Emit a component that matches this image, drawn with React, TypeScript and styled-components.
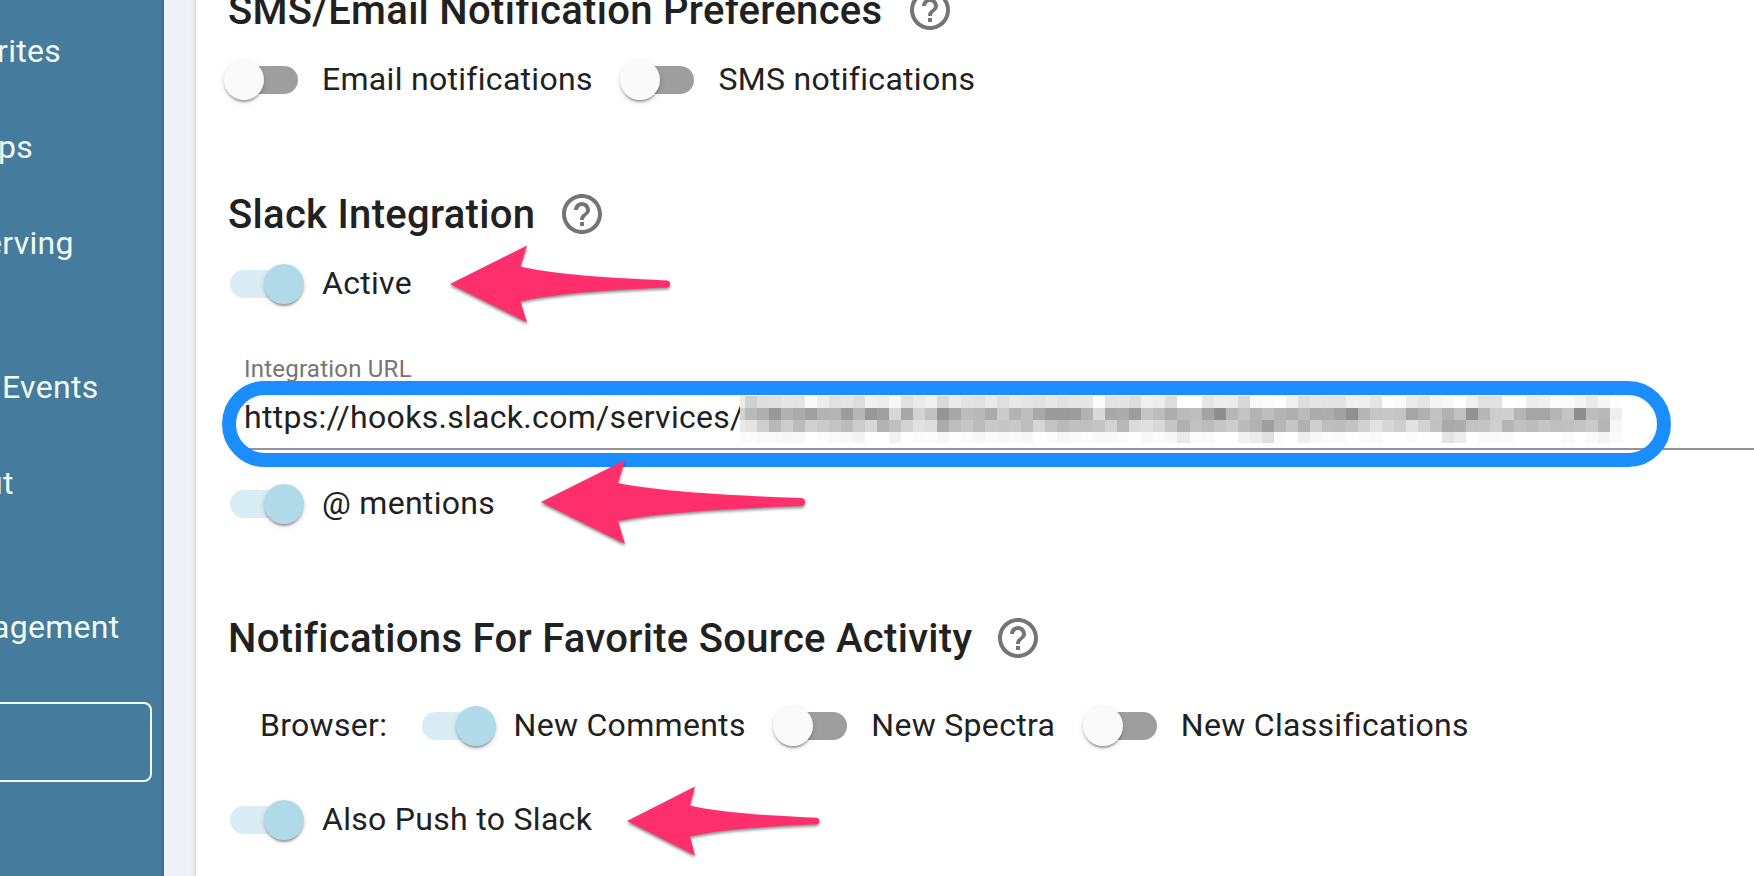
import React from "react";
import styled, { createGlobalStyle } from "styled-components";

const GlobalStyle = createGlobalStyle`
  *, *::before, *::after { box-sizing: border-box; }
  body {
    margin: 0;
    background: #f0f1f6;
    font-family: Roboto, "Liberation Sans", sans-serif;
    color: #212121;
    overflow: hidden;
  }
`;

const Page = styled.div`
  position: relative;
  display: flex;
  width: 1754px;
  height: 876px;
  overflow: hidden;
  background: #f0f1f6;
`;

const Sidebar = styled.nav`
  flex: none;
  width: 164px;
  height: 876px;
  overflow: hidden;
  background: #457b9d;
  border-right: 2px solid #3e6f8e;
`;

const NavItem = styled.div<{ $gap?: number; $shift?: number }>`
  height: 48px;
  margin-top: ${(p) => p.$gap ?? 48}px;
  margin-left: ${(p) => p.$shift ?? 0}px;
  font-size: 32px;
  line-height: 48px;
  letter-spacing: 0.3px;
  white-space: nowrap;
  color: #f1faee;
`;

const NavBox = styled.div`
  width: 160px;
  height: 80px;
  margin: 51px 0 0 -8px;
  border: 2px solid #f1faee;
  border-radius: 8px;
`;

const Paper = styled.main`
  flex: none;
  width: 1700px;
  height: 1000px;
  margin: -40px 0 0 32px;
  padding: 18px 32px 0;
  background: #fff;
  box-shadow: 0 4px 2px -2px rgba(0, 0, 0, 0.2), 0 2px 2px rgba(0, 0, 0, 0.14),
    0 2px 6px rgba(0, 0, 0, 0.12);
`;

const Section = styled.section`
  margin-bottom: 64px;
`;

const HeadingRow = styled.div<{ $gap: number }>`
  display: flex;
  align-items: center;
  gap: ${(p) => p.$gap}px;
  height: 64px;
`;

const Heading = styled.h6`
  margin: 0;
  padding-top: 2px;
  font-size: 40px;
  font-weight: 500;
  line-height: 64px;
  letter-spacing: 0.3px;
  white-space: nowrap;
`;

const HelpSvg = styled.svg`
  width: 48px;
  height: 48px;
  fill: #757575;
`;

const SwitchRow = styled.div<{ $inset?: boolean }>`
  display: flex;
  align-items: center;
  height: 76px;
  padding-left: ${(p) => (p.$inset ? 32 : 0)}px;
  margin: ${(p) => (p.$inset ? "18px 0" : "0")};
`;

const ControlLabel = styled.label`
  display: flex;
  align-items: center;
  margin-left: -22px;
  margin-right: 31.6px;
`;

const SwitchRoot = styled.span`
  display: flex;
  width: 116px;
  height: 76px;
  padding: 24px;
`;

const Track = styled.span<{ $on?: boolean }>`
  display: flex;
  align-items: center;
  width: 68px;
  height: 28px;
  padding-left: ${(p) => (p.$on ? 34 : 0)}px;
  border-radius: 14px;
  background: ${(p) => (p.$on ? "#d9edf4" : "#9e9e9e")};
`;

const Thumb = styled.span<{ $on?: boolean }>`
  flex: none;
  width: 40px;
  height: 40px;
  margin-left: ${(p) => (p.$on ? 0 : -6)}px;
  border-radius: 50%;
  background: ${(p) => (p.$on ? "#b1dae8" : "#fafafa")};
  box-shadow: 0 4px 2px -2px rgba(0, 0, 0, 0.2), 0 2px 2px rgba(0, 0, 0, 0.14),
    0 2px 6px rgba(0, 0, 0, 0.12);
`;

const Body = styled.span`
  padding-bottom: 2px;
  font-size: 32px;
  line-height: 48px;
  letter-spacing: 0.3px;
  white-space: nowrap;
`;

const RowCaption = styled(Body)`
  width: 159.5px;
`;

const Field = styled.div`
  margin: 32px 0 16px 16px;
  height: 96px;
`;

const FieldLabel = styled.div`
  height: 32px;
  padding-top: 1px;
  font-size: 24px;
  line-height: 28px;
  letter-spacing: 0.225px;
  color: #757575;
`;

const Input = styled.div`
  display: flex;
  height: 64px;
  padding-top: 10px;
  border-bottom: 2px solid #949494;
`;

const Url = styled.div`
  flex: none;
  width: 496px;
  overflow: hidden;
  font-size: 32px;
  line-height: 42px;
  letter-spacing: 0.3px;
  white-space: nowrap;
`;

const MosaicSvg = styled.svg`
  flex: none;
  width: 882px;
  height: 47px;
`;

const Ring = styled.div`
  position: absolute;
  left: 222px;
  top: 381px;
  width: 1449px;
  height: 86px;
  border: 14px solid #1b8eff;
  border-radius: 43px;
`;

const ArrowSvg = styled.svg<{ $x: number; $y: number }>`
  position: absolute;
  left: ${(p) => p.$x}px;
  top: ${(p) => p.$y - 50}px;
  width: 280px;
  height: 100px;
  overflow: visible;
  filter: drop-shadow(0 2px 1.5px rgba(0, 0, 0, 0.45));
`;

const HelpIcon = () => (
  <HelpSvg viewBox="0 0 24 24">
    <path d="M11 18h2v-2h-2v2zm1-16C6.48 2 2 6.48 2 12s4.48 10 10 10 10-4.48 10-10S17.52 2 12 2zm0 18c-4.41 0-8-3.59-8-8s3.59-8 8-8 8 3.59 8 8-3.59 8-8 8zm0-14c-2.21 0-4 1.79-4 4h2c0-1.1.9-2 2-2s2 .9 2 2c0 2-3 1.75-3 5h2c0-2.25 3-2.5 3-5 0-2.21-1.79-4-4-4z" />
  </HelpSvg>
);

const Toggle = ({ on, label }: { on?: boolean; label: string }) => (
  <ControlLabel>
    <SwitchRoot>
      <Track $on={on}>
        <Thumb $on={on} />
      </Track>
    </SwitchRoot>
    <Body>{label}</Body>
  </ControlLabel>
);

const Title = ({ gap, children }: { gap: number; children: string }) => (
  <HeadingRow $gap={gap}>
    <Heading>{children}</Heading>
    <HelpIcon />
  </HeadingRow>
);

interface ArrowProps {
  x: number;
  y: number;
  head: [number, number];
  notch: [number, number];
  end: number;
  half: number;
}

// Left-pointing arrow with a tapered shaft; x and y locate the tip.
const Arrow = ({ x, y, head, notch, end, half }: ArrowProps) => {
  const cx = notch[0] + (end - notch[0]) * 0.27;
  const cy = notch[1] * 0.45;
  const d = [
    `M0 50L${head[0]} ${50 - head[1]}L${notch[0]} ${50 - notch[1]}`,
    `Q${cx} ${50 - cy} ${end} ${50 - half}`,
    `A${half} ${half} 0 0 1 ${end} ${50 + half}`,
    `Q${cx} ${50 + cy} ${notch[0]} ${50 + notch[1]}`,
    `L${head[0]} ${50 + head[1]}Z`,
  ].join("");
  return (
    <ArrowSvg $x={x} $y={y} viewBox="0 0 280 100">
      <path d={d} fill="#ff2f6d" />
    </ArrowSvg>
  );
};

// Grey levels of the redacted part of the URL, one hex pair per 12px cell.
const SHADES = [
  "ec d0 de df e5 e3 fa ec e1 e4 dd f0 ed f8 e1 ea f0 d9 eb e3 e1 ea df e8 e5 e2 e8 e1 e5 e6 fb e2 e4 dd f0 ed dd ff ff e6 ed ec d8 f9 fb ff f0 dd e5 e3 e3 f0 ee e4 fe fb ea e4 f5 f8 ff f0 e1 e1 ff fe ed f0 fb fb f5 ea f7 fe",
  "d2 ba ae 98 b1 ab a0 b3 b4 9c b6 98 a0 d8 a7 d2 c1 94 a8 bc b9 ab cb b3 bd aa 9b 9a 9c b2 d9 a7 ac 9d c6 bd ad ba bd a3 8d b6 c3 b3 be b3 ae bb ab ad a2 90 b5 c5 c7 c4 a5 b0 c2 b1 c1 92 b6 cd cf b5 a5 a5 b5 c4 8e bd b9 ee",
  "e9 e4 ce b8 cc bb d1 cb c4 bb cc d8 b3 c0 d2 e1 dd aa be c6 bc c8 c6 c8 bd d5 c3 ba c0 bf c3 d2 b9 db e0 d8 c6 b0 c1 bb c6 cd bb b2 9e b6 c6 b1 ce bd bc c2 d0 e1 d7 ce e2 d2 c1 a9 ac c2 c4 d0 b5 c1 bc c4 bf c0 c4 ca b5 f7",
  "fa fc f9 f9 f7 f8 ff fc f9 f8 f3 ff ff f2 fe fb fc f7 fe fb f7 fb f8 fa f7 fe fc f6 f9 fc f8 f8 fb ff f8 fb f7 e9 fb f9 ff ff f1 ec df fc ff ef f8 fb fa fe fc f9 ff ff fb fd fd e4 ec ff f9 f9 fa ff ff ff ff f9 ff f9 f4 fa",
].map((row) => row.split(" "));

const Mosaic = () => (
  <MosaicSvg viewBox="0 0 881 47" preserveAspectRatio="none" shapeRendering="crispEdges">
    {SHADES.map((row, r) =>
      row.map((s, c) => (
        <rect
          key={`${r}-${c}`}
          x={c === 0 ? 0 : c * 12 - 7}
          y={r * 12}
          width={c === 0 ? 5 : 12}
          height={r === 3 ? 11 : 12}
          fill={`#${s}${s}${s}`}
        />
      ))
    )}
  </MosaicSvg>
);

export default function App() {
  return (
    <>
      <GlobalStyle />
      <Page>
        <Sidebar>
          <NavItem $gap={27} $shift={-3}>rites</NavItem>
          <NavItem $shift={-2}>ps</NavItem>
          <NavItem $shift={-15}>erving</NavItem>
          <NavItem $gap={96} $shift={2}>Events</NavItem>
          <NavItem $shift={-15}>ut</NavItem>
          <NavItem $gap={96} $shift={-8}>agement</NavItem>
          <NavBox />
        </Sidebar>
        <Paper>
          <Section>
            <Title gap={24}>SMS/Email Notification Preferences</Title>
            <SwitchRow>
              <Toggle label="Email notifications" />
              <Toggle label="SMS notifications" />
            </SwitchRow>
          </Section>
          <Section>
            <Title gap={23}>Slack Integration</Title>
            <SwitchRow>
              <Toggle on label="Active" />
            </SwitchRow>
            <Field>
              <FieldLabel>Integration URL</FieldLabel>
              <Input>
                <Url>https://hooks.slack.com/services/</Url>
                <Mosaic />
              </Input>
            </Field>
            <SwitchRow>
              <Toggle on label="@ mentions" />
            </SwitchRow>
          </Section>
          <Section>
            <Title gap={22}>Notifications For Favorite Source Activity</Title>
            <SwitchRow $inset>
              <RowCaption>Browser:</RowCaption>
              <Toggle on label="New Comments" />
              <Toggle label="New Spectra" />
              <Toggle label="New Classifications" />
            </SwitchRow>
            <SwitchRow>
              <Toggle on label="Also Push to Slack" />
            </SwitchRow>
          </Section>
        </Paper>
        <Ring />
        <Arrow x={450} y={284} head={[77, 38.5]} notch={[70.5, 17.5]} end={216.5} half={3.6} />
        <Arrow x={541} y={502} head={[84, 42]} notch={[77, 19]} end={260} half={4} />
        <Arrow x={626.5} y={821} head={[68, 34.5]} notch={[63, 15.5]} end={189} half={3.3} />
      </Page>
    </>
  );
}
